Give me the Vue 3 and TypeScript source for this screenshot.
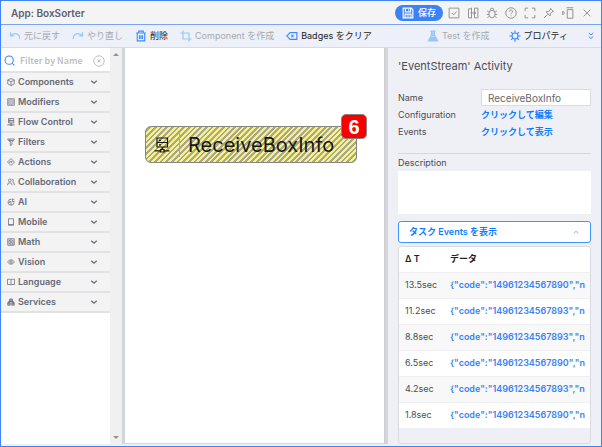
<script setup lang="ts">
import { ref } from 'vue'

const icons: Record<string, string> = {
  save: 'M1.5 1.5h11l2 2v11h-13zM4.500 1.500v5h7v-5M4 14v-4.500h8V14M9 3v2M6 12h4',
  check: 'M1.500 1.500h13v13h-13zM5 8l2.500 2.500L11.500 6',
  compare: 'M6 2.500H2v12h4M10 1.500h4.500v13H10zM6 1v14M4.500 8h7M9 5.500L11.500 8 9 10.500',
  bug: 'M5.500 4.500a2.500 3 0 0 1 5 0M4 8q0-3.500 4-3.500T12 8v2.500q-1 4-4 4t-4-4zM4 7L1.500 5M12 7l2.500-2M4 10H1M12 10h3M4.500 12L2 14.500M11.500 12l2.500 2.500',
  help: 'M8 1a7 7 0 1 0 0 14A7 7 0 1 0 8 1M5.800 6.200a2.200 2 0 1 1 3.200 1.700Q8 8.400 8 9.500M8 11.200v1',
  expand: 'M1.500 5.500v-4h4M10.500 1.500h4v4M14.500 10.500v4h-4M5.500 14.500h-4v-4',
  pin: 'M9.500 1.500l5 5M10.500 2.500L7.500 6 4 6.500l5.500 5.500.500-3.500 3.500-3M6.500 9.500L1.500 14.500',
  dock: 'M7 3.500h7.500v11.500H7zM6 1h9M1 5.500L3.500 8 1 10.500z',
  close: 'M3.500 3.500l9 9M12.500 3.500l-9 9',
  undo: 'M2 3v5h5M2 8q5-5 10-2 2.500 2 2.500 6',
  redo: 'M14 3v5H9M14 8Q9 3 4 6q-2.500 2-2.500 6',
  trash: 'M1.500 4h13M5 4V1.500h6V4M3 4v10.500h10V4M6 7v5M8 7v5M10 7v5',
  crop: 'M4 0.500v11.500h11.500M0.500 4H12v11.500',
  badge: 'M5.500 3.500h9v9h-9L1 8zM7 6.500l3 3M10 6.500l-3 3',
  flask: 'M6 1.500v5L2 14.500h12l-4-8v-5M4.500 1.500h7M5 10l-2 4h10l-2-4zM5 11.500h6M4 13h8M7 2v6h2V2',
  gear: 'M8 4a4 4 0 1 0 0 8 4 4 0 1 0 0-8M8 0.500V4M8 12v3.500M0.500 8H4M12 8h3.500M2.700 2.700l2.500 2.500M10.800 10.800l2.500 2.500M13.300 2.700l-2.500 2.500M5.200 10.800l-2.500 2.500',
  more: 'M3.500 2L8 6l4.500-4M3.500 9L8 13l4.500-4',
  search: 'M7.500 1.500a6 6 0 1 0 0 12 6 6 0 1 0 0-12M12 12l3 3',
  clear: 'M8 1a7 7 0 1 0 0 14A7 7 0 1 0 8 1M5.800 5.800l4.400 4.400M10.200 5.800l-4.400 4.400',
  cube: 'M8 1l6.500 3v8L8 15l-6.500-3V4zM1.500 4L8 7.500 14.500 4M8 7.500V15',
  modifier: 'M1.500 1.500h13v13h-13zM6 2v12M10 2v12M2 6h2M2 10h2M12 6h2M12 10h2',
  flow: 'M3 1h10.500v4.500H3zM3 5.500h10.500V10H3zM5 3.300h2M5 7.800h2M8.200 10v2.500M6.500 12.500h3.500v2.500H6.500zM0.500 13.800h6M10 13.800h5.500',
  filter: 'M1 2h14l-5 6.500v5L6.500 15V8.500zM3 5h10M5 2l3 6',
  action: 'M8 1l7 7-7 7-7-7zM5.500 10V7.500H10M8.500 5.500l2 2-2 2',
  people: 'M5.500 2a2.500 3 0 1 0 0 6 2.500 3 0 1 0 0-6M1 14.500q0-5 4.500-5t4.500 5M9.500 2q4 0 3 4.500L11 8q4 1 4 6.500',
  ai: 'M9 2.500a6 6 0 1 0 5 6M5 10V7h3v3M11 1v6h4M12 2l3 2M6 12h4',
  mobile: 'M3 1.500h10v13H3zM3.500 13h9',
  math: 'M1.500 1.500h13v13h-13zM8 1.500v13M1.500 8h13M3.500 4.800h3M5 3.300v3M10 4.800h3M3.500 10l3 3M6.500 10l-3 3M10 10.500h3M10 12.500h3',
  eye: 'M1 8q7-9 14 0-7 9-14 0M8 5.500a2.500 2.500 0 1 0 0 5 2.500 2.500 0 1 0 0-5M8 7.500v1',
  book: 'M1 2.500h5.500L8 4l1.500-1.500H15V13H9.500L8 14.500 6.500 13H1zM8 4v10',
  services: 'M5 2h6v5H5zM1.500 9h5v5.500h-5zM9.500 9h5v5.500h-5zM5 4.500h6M1.500 11.500h5M9.500 11.500h5M8 2v5M4 9v5M12 9v5M3 9V7h10v2',
  chevron: 'M2.500 5.500L8 10.500l5.500-5',
}

const windowTools = [
  { icon: 'check', label: 'Validate' },
  { icon: 'compare', label: 'Compare' },
  { icon: 'bug', label: 'Debug' },
  { icon: 'help', label: 'Help' },
  { icon: 'expand', label: 'Full screen' },
  { icon: 'pin', label: 'Pin' },
  { icon: 'dock', label: 'Dock' },
  { icon: 'close', label: 'Close' },
]

const groups = [
  { name: 'Components', icon: 'cube' },
  { name: 'Modifiers', icon: 'modifier' },
  { name: 'Flow Control', icon: 'flow' },
  { name: 'Filters', icon: 'filter' },
  { name: 'Actions', icon: 'action' },
  { name: 'Collaboration', icon: 'people' },
  { name: 'AI', icon: 'ai' },
  { name: 'Mobile', icon: 'mobile' },
  { name: 'Math', icon: 'math' },
  { name: 'Vision', icon: 'eye' },
  { name: 'Language', icon: 'book' },
  { name: 'Services', icon: 'services' },
]

const events = [
  { delta: '13.5sec', data: '{"code":"14961234567890","n' },
  { delta: '11.2sec', data: '{"code":"14961234567893","n' },
  { delta: '8.8sec', data: '{"code":"14961234567893","n' },
  { delta: '6.5sec', data: '{"code":"14961234567890","n' },
  { delta: '4.2sec', data: '{"code":"14961234567893","n' },
  { delta: '1.8sec', data: '{"code":"14961234567890","n' },
]

const filterText = ref('')
const activityName = ref('ReceiveBoxInfo')
const description = ref('')
const eventsOpen = ref(true)
</script>

<template>
  <div class="app">
    <header class="titlebar">
      <h1>App: BoxSorter</h1>
      <button class="save" type="button">
        <svg class="icon" viewBox="0 0 16 16"><path :d="icons.save" /></svg>保存
      </button>
      <div class="tools">
        <button v-for="tool in windowTools" :key="tool.icon" type="button" :aria-label="tool.label">
          <svg class="icon" viewBox="0 0 16 16"><path :d="icons[tool.icon]" /></svg>
        </button>
      </div>
    </header>

    <nav class="toolbar">
      <button type="button" disabled><svg class="icon" viewBox="0 0 16 16"><path :d="icons.undo" /></svg>元に戻す</button>
      <button type="button" disabled><svg class="icon" viewBox="0 0 16 16"><path :d="icons.redo" /></svg>やり直し</button>
      <button type="button"><svg class="icon" viewBox="0 0 16 16"><path :d="icons.trash" /></svg>削除</button>
      <button type="button" disabled><svg class="icon" viewBox="0 0 16 16"><path :d="icons.crop" /></svg>Component を作成</button>
      <button type="button"><svg class="icon" viewBox="0 0 16 16"><path :d="icons.badge" /></svg>Badges をクリア</button>
      <div class="toolbar-end">
        <button type="button" disabled><svg class="icon" viewBox="0 0 16 16"><path :d="icons.flask" /></svg>Test を作成</button>
        <button type="button"><svg class="icon" viewBox="0 0 16 16"><path :d="icons.gear" /></svg>プロパティ</button>
        <button class="more" type="button" aria-label="More"><svg class="icon" viewBox="0 0 16 16"><path :d="icons.more" /></svg></button>
      </div>
    </nav>

    <main class="workspace">
      <aside class="palette">
        <div class="palette-list">
          <div class="search">
            <svg class="icon" viewBox="0 0 16 16"><path :d="icons.search" /></svg>
            <input v-model="filterText" type="text" placeholder="Filter by Name" aria-label="Filter by Name" />
            <button type="button" aria-label="Clear filter" @click="filterText = ''">
              <svg class="icon" viewBox="0 0 16 16"><path :d="icons.clear" /></svg>
            </button>
          </div>
          <button v-for="group in groups" :key="group.name" class="group" type="button">
            <svg class="icon" viewBox="0 0 16 16"><path :d="icons[group.icon]" /></svg>
            <span>{{ group.name }}</span>
            <svg class="icon chevron" viewBox="0 0 16 16"><path :d="icons.chevron" /></svg>
          </button>
        </div>
        <div class="scrollbar" aria-hidden="true"><i class="up"></i><i class="down"></i></div>
      </aside>

      <section class="canvas">
        <div class="node">
          <svg class="icon" viewBox="0 0 16 16"><path :d="icons.flow" /></svg>
          <span class="node-name">ReceiveBoxInfo</span>
          <span class="count">6</span>
        </div>
      </section>

      <aside class="details">
        <h2>'EventStream' Activity</h2>
        <div class="fields">
          <label for="activity-name">Name</label>
          <input id="activity-name" v-model="activityName" type="text" />
          <span>Configuration</span>
          <a href="#configuration">クリックして編集</a>
          <span>Events</span>
          <a href="#events">クリックして表示</a>
        </div>
        <div class="description">
          <label for="description">Description</label>
          <textarea id="description" v-model="description"></textarea>
        </div>
        <button class="toggle" type="button" :aria-expanded="eventsOpen" @click="eventsOpen = !eventsOpen">
          <span>タスク Events を表示</span>
          <svg class="icon" viewBox="0 0 16 16"><path d="M3 10.500L8 6l5 4.500" /></svg>
        </button>
        <div v-if="eventsOpen" class="events">
          <table>
            <thead>
              <tr><th class="delta">Δ T</th><th>データ</th></tr>
            </thead>
            <tbody>
              <tr v-for="event in events" :key="event.delta">
                <td>{{ event.delta }}</td>
                <td><a href="#event">{{ event.data }}</a></td>
              </tr>
            </tbody>
          </table>
        </div>
      </aside>
    </main>
  </div>
</template>

<style>
body {
  margin: 0;
}
</style>

<style scoped>
.app,
.app * {
  box-sizing: border-box;
}
.app {
  display: flex;
  flex-direction: column;
  height: 100vh;
  overflow: hidden;
  border: 1px solid #3f83f8;
  background: #f0f0f1;
  color: #4b4d52;
  font-family: Inter, "Noto Sans CJK JP", sans-serif;
  font-size: 9px;
  line-height: 16px;
}
button,
input,
textarea {
  margin: 0;
  padding: 0;
  border: 0;
  background: none;
  color: inherit;
  font: inherit;
}
a {
  color: #0d7dff;
  font-weight: 600;
  text-decoration: none;
}
.icon {
  flex: none;
  display: block;
  width: 12px;
  height: 12px;
  fill: none;
  stroke: currentColor;
  stroke-width: 1.5;
}
.titlebar {
  flex: none;
  display: flex;
  align-items: center;
  gap: 5px;
  height: 24px;
  padding: 0 8px 0 10px;
  border-bottom: 1px solid #76a4f2;
  background: #f4f4f4;
}
h1 {
  flex: 1;
  margin: 0;
  color: #5c6073;
  font-size: 10px;
  font-weight: 600;
}
.save {
  display: flex;
  align-items: center;
  gap: 4px;
  height: 16px;
  padding: 0 7px;
  border-radius: 8px;
  background: #3b82f6;
  color: #fff;
  font-weight: 500;
}
.tools {
  display: flex;
  gap: 7px;
  color: #929292;
}
.tools .icon {
  stroke-width: 1.3;
}
.toolbar {
  flex: none;
  display: flex;
  align-items: center;
  gap: 12px;
  height: 23px;
  padding: 0 6px 0 8px;
  border-bottom: 1px solid #d9dbe1;
  background: #edf0f8;
  color: #222;
}
.toolbar button {
  display: flex;
  align-items: center;
  gap: 3px;
  white-space: nowrap;
}
.toolbar button:disabled {
  color: #a7a9ae;
}
.toolbar .icon {
  color: #3b8cff;
}
.toolbar button:disabled .icon {
  color: #94c7f7;
}
.toolbar-end {
  display: flex;
  align-items: center;
  gap: 19px;
  margin-left: auto;
}
.toolbar .more .icon {
  width: 8px;
  height: 8px;
  stroke-width: 2;
}
.workspace {
  flex: 1;
  display: flex;
  min-height: 0;
  padding-bottom: 2px;
}
.palette {
  flex: none;
  display: flex;
  width: 124px;
  border-right: 3px solid #d2d6dc;
  background: #f0f0f0;
}
.palette-list {
  flex: 1;
  background: #fff;
}
.search {
  display: flex;
  align-items: center;
  gap: 5px;
  height: 23px;
  padding: 2px 5px 0 3px;
  color: #b9b9b9;
}
.search > .icon {
  width: 11px;
  height: 11px;
  color: #3b82f6;
}
.search input {
  flex: 1;
  width: 0;
  font-family: "Noto Sans CJK JP", sans-serif;
  font-weight: 500;
}
.search input::placeholder {
  color: #b9b9b9;
  opacity: 1;
}
.search button .icon {
  stroke-width: 1.2;
}
.group {
  display: flex;
  align-items: center;
  gap: 3px;
  width: 100%;
  height: 20px;
  padding: 0 12px 0 6px;
  border-top: 2px solid #e2e2e4;
  background: #f3f3f3;
  color: #666978;
  font-weight: 600;
  text-align: left;
}
.group span {
  flex: 1;
}
.group .icon {
  width: 8px;
  height: 8px;
}
.group .chevron {
  stroke-width: 2.5;
}
.group:last-child {
  height: 22px;
  border-bottom: 2px solid #e2e2e4;
}
.scrollbar {
  flex: none;
  display: flex;
  flex-direction: column;
  justify-content: space-between;
  align-items: center;
  width: 12px;
  padding: 5px 0;
}
.up,
.down {
  border: 3px solid transparent;
}
.up {
  border-top: 0;
  border-bottom-color: #929292;
}
.down {
  border-bottom: 0;
  border-top-color: #929292;
}
.canvas {
  flex: 1;
  min-width: 0;
  padding: 78px 20px;
  border-right: 1px solid #cdcdcf;
  border-bottom: 1px solid #d4d6d9;
  background: #fff;
}
.node {
  position: relative;
  display: flex;
  align-items: center;
  width: 212px;
  height: 37px;
  border: 1px solid #868680;
  border-radius: 6px;
  background: repeating-linear-gradient(135deg, #f8f28c 0 2px, #aaa78a 2px 4px);
  color: #171717;
}
.node .icon {
  width: 16px;
  height: 16px;
  margin: 0 9px 0 8px;
  stroke-width: 1.2;
}
.node-name {
  padding-left: 8px;
  border-left: 1px solid #b0ac7c;
  font-size: 20px;
  line-height: 24px;
}
.count {
  position: absolute;
  top: -13px;
  right: -11px;
  width: 26px;
  height: 25px;
  border: 1px solid #8d8080;
  border-radius: 5px;
  background: #f80000;
  color: #fff;
  font-family: "Liberation Sans", sans-serif;
  font-size: 20px;
  font-weight: 700;
  line-height: 24px;
  text-align: center;
}
.details {
  flex: none;
  display: flex;
  flex-direction: column;
  width: 216px;
  padding: 8px 10px 0 10px;
  border-left: 3px solid #d2d4de;
  background: #eff0f6;
}
h2 {
  margin: 0 0 13px;
  font-size: 11px;
  font-weight: 400;
  line-height: 20px;
}
.fields {
  display: grid;
  grid-template-columns: 83px 1fr;
  row-gap: 1px;
  align-items: center;
  padding-bottom: 13px;
  border-bottom: 1px solid #d5d7dd;
}
.fields input {
  width: 100%;
  height: 17px;
  padding: 0 6px;
  border: 1px solid #dadce1;
  background: #fff;
  color: #686868;
  font-size: 10px;
}
.description {
  display: flex;
  flex-direction: column;
  padding-top: 1px;
}
textarea {
  display: block;
  width: 100%;
  height: 43px;
  resize: none;
  background: #fff;
}
.toggle {
  flex: none;
  display: flex;
  align-items: center;
  justify-content: space-between;
  height: 22px;
  margin: 7px 0 3px;
  padding: 0 11px 0 10px;
  border: 1px solid #3d96ff;
  border-radius: 3px;
  background: #fff;
  color: #0d7dff;
  font-weight: 600;
}
.toggle .icon {
  width: 6px;
  height: 6px;
}
.events {
  flex: 1;
  min-height: 0;
  overflow: hidden;
  border: 1px solid #d9dbe0;
  border-radius: 3px;
}
table {
  width: 100%;
  border-collapse: collapse;
  table-layout: fixed;
  background: #fff;
}
th,
td {
  height: 26px;
  padding: 0 0 0 6px;
  text-align: left;
  white-space: nowrap;
}
th {
  height: 25px;
  color: #222;
  font-weight: 600;
}
.delta {
  width: 45px;
}
td {
  border-top: 1px solid #f0f0f2;
}
tbody tr:nth-child(odd) {
  background: #f8f8f8;
}
td a {
  color: #3b82f6;
}
</style>
